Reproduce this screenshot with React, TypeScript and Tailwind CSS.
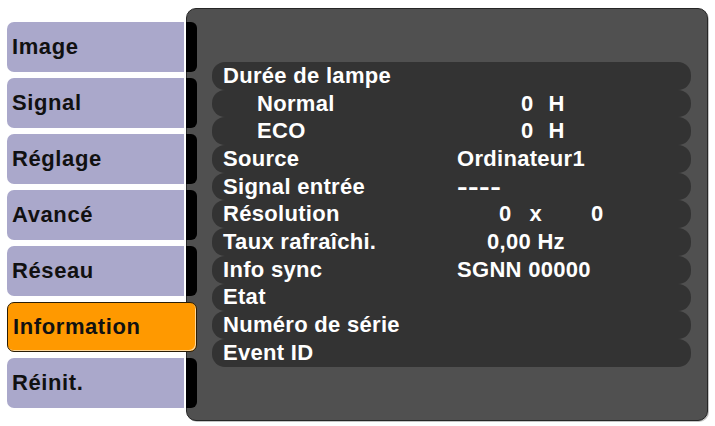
import React from 'react';

const tabs = ['Image', 'Signal', 'Réglage', 'Avancé', 'Réseau', 'Information', 'Réinit.'];
const selected = 'Information';

type Row = { label: string; indent?: boolean; value?: React.ReactNode };

const hours = (
  <span className="ml-[64px]">
    0<span className="ml-[15px]">H</span>
  </span>
);

const rows: Row[] = [
  { label: 'Durée de lampe' },
  { label: 'Normal', indent: true, value: hours },
  { label: 'ECO', indent: true, value: hours },
  { label: 'Source', value: 'Ordinateur1' },
  {
    label: 'Signal entrée',
    value: <span className="inline-block origin-left scale-x-[1.45]">----</span>,
  },
  {
    label: 'Résolution',
    value: (
      <span className="ml-[42px]">
        0<span className="ml-[18px]">x</span>
        <span className="ml-[49px]">0</span>
      </span>
    ),
  },
  { label: 'Taux rafraîchi.', value: <span className="ml-[30px]">0,00 Hz</span> },
  { label: 'Info sync', value: 'SGNN 00000' },
  { label: 'Etat' },
  { label: 'Numéro de série' },
  { label: 'Event ID' },
];

function MenuTab({ label }: { label: string }) {
  if (label === selected) {
    return (
      <div className="flex h-[50px] w-[190px] items-center rounded-[7px] border border-[#2a1d05] bg-[#ff9900] pl-[5px] tracking-[0.6px] text-[#111] shadow-[inset_-1px_-1px_0_#ffd79a]">
        {label}
      </div>
    );
  }
  return (
    <div className="flex h-[50px] w-[190px]">
      <div className="flex w-[177px] items-center rounded-l-[7px] bg-[#aaa8cb] pl-[5px] tracking-[0.6px] text-[#111]">
        {label}
      </div>
      <div className="w-[2px] bg-white" />
      <div className="w-[11px] rounded-r-[6px] bg-black" />
    </div>
  );
}

export default function App() {
  return (
    <div className="relative flex h-[426px] w-[715px] items-start overflow-hidden bg-white font-['Liberation_Sans',Arial,sans-serif] text-[22px] font-bold leading-none">
      <div className="relative z-10 ml-[7px] mt-[22px] flex w-[179px] shrink-0 flex-col gap-[6px]">
        {tabs.map(t => (
          <MenuTab key={t} label={t} />
        ))}
      </div>

      <div className="mt-[8px] h-[413px] w-[522px] shrink-0 rounded-[10px] border border-[#262626] bg-[#505050] shadow-[1px_1px_0_#c4c4c4]">
        <div className="ml-[25px] mt-[53px] flex w-[479px] flex-col">
          {rows.map(r => (
            <div key={r.label} className="flex h-[27.7px] items-center rounded-[13px] bg-[#333333] tracking-[0.3px] text-white">
              <div className={r.indent ? 'w-[245px] pl-[45px]' : 'w-[245px] pl-[11px]'}>{r.label}</div>
              <div className="flex-1 whitespace-pre">{r.value}</div>
            </div>
          ))}
        </div>
      </div>
    </div>
  );
}
